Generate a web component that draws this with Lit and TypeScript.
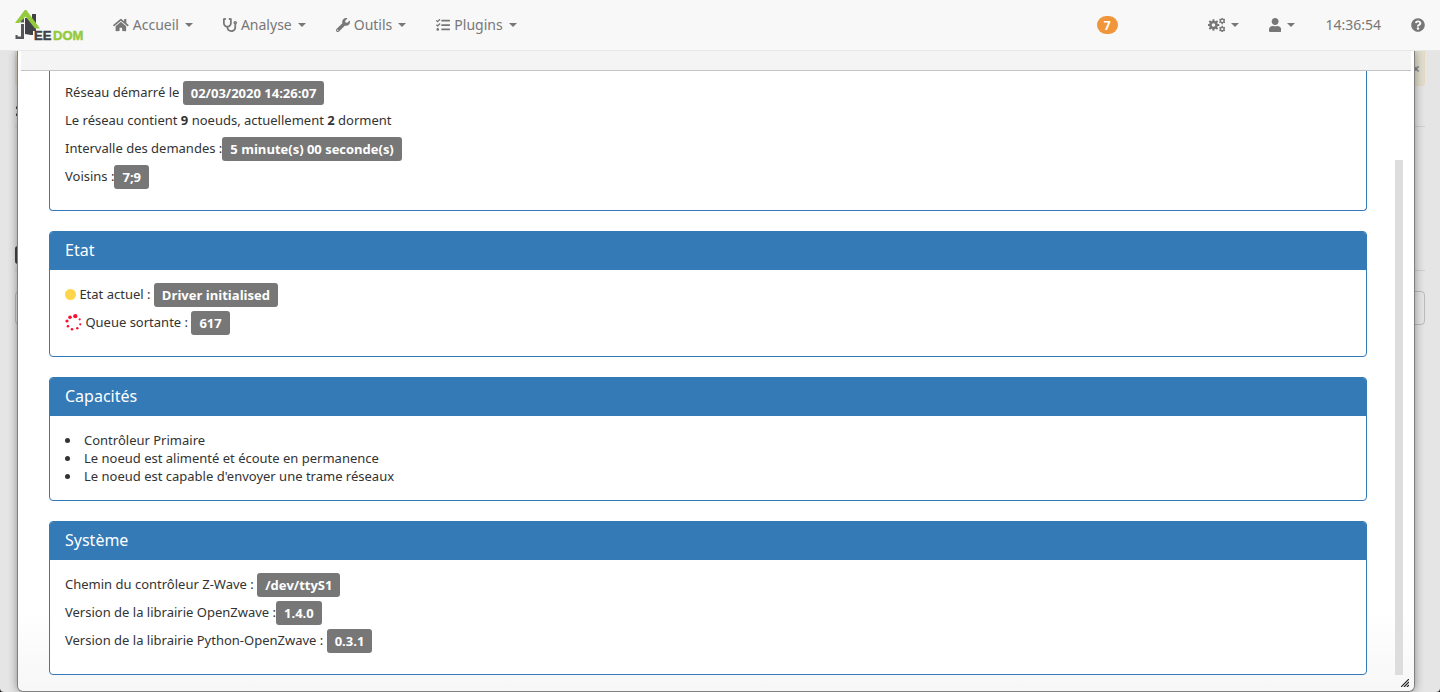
import { LitElement, html, css, svg, nothing } from "lit";
import { customElement, property } from "lit/decorators.js";

/** Outline of a toothed wheel with a round hole, centred on cx, cy. */
function gear(cx: number, cy: number, outer: number, inner: number, hole: number, teeth: number): string {
  const step = (Math.PI * 2) / teeth;
  const at = (r: number, a: number) => `${(cx + r * Math.cos(a)).toFixed(1)} ${(cy + r * Math.sin(a)).toFixed(1)}`;
  let d = "";
  for (let i = 0; i < teeth; i++) {
    const a = i * step - Math.PI / 2;
    d += `${i ? "L" : "M"}${at(inner, a - step * 0.3)}L${at(outer, a - step * 0.2)}L${at(outer, a + step * 0.2)}L${at(inner, a + step * 0.3)}`;
  }
  return `${d}ZM${cx + hole} ${cy}A${hole} ${hole} 0 1 0 ${cx - hole} ${cy}A${hole} ${hole} 0 1 0 ${cx + hole} ${cy}Z`;
}

const ICONS: Record<string, { w: number; d: string }> = {
  home: {
    w: 576,
    d: "M280.37 148.26L96 300.11V464a16 16 0 0 0 16 16l112.06-.29a16 16 0 0 0 15.92-16V368a16 16 0 0 1 16-16h64a16 16 0 0 1 16 16v95.64a16 16 0 0 0 16 16.05L464 480a16 16 0 0 0 16-16V300L295.67 148.26a12.19 12.19 0 0 0-15.3 0zM571.6 251.47L488 182.56V44.05a12 12 0 0 0-12-12h-56a12 12 0 0 0-12 12v72.61L318.47 43a48 48 0 0 0-61 0L4.34 251.47a12 12 0 0 0-1.6 16.9l25.5 31A12 12 0 0 0 45.15 301l235.22-193.74a12.19 12.19 0 0 1 15.3 0L530.9 301a12 12 0 0 0 16.9-1.6l25.5-31a12 12 0 0 0-1.7-16.93z",
  },
  stethoscope: {
    w: 512,
    d: "M447.1 112c-34.2.5-62.3 28.4-63 62.6-.5 24.3 12.5 45.6 32 56.8V344c0 57.3-50.2 104-112 104-60 0-109.2-44.1-111.9-99.2C265 333.8 320 269.2 320 192V36.6c0-11.4-8.1-21.3-19.3-23.5L237.8.5c-13-2.6-25.6 5.8-28.2 18.8L206.4 35c-2.6 13 5.8 25.6 18.8 28.2l30.7 6.1v121.4c0 52.9-42.2 96.7-95.1 97.2-53.4.5-96.9-42.7-96.9-96V69.4l30.7-6.1c13-2.6 21.4-15.2 18.8-28.2l-3.1-15.7C107.7 6.4 95.1-2 82.1.6L19.3 13C8.1 15.3 0 25.1 0 36.6V192c0 77.3 55.1 142 128.1 156.8C130.7 439.2 208.6 512 304 512c97 0 176-75.4 176-168V231.4c19.1-11.1 32-31.7 32-55.4 0-35.7-29.2-64.5-64.9-64zm.9 80c-8.8 0-16-7.2-16-16s7.2-16 16-16 16 7.2 16 16-7.2 16-16 16z",
  },
  wrench: {
    w: 512,
    d: "M507.73 109.1c-2.24-9.03-13.54-12.09-20.12-5.51l-74.36 74.36-67.88-11.31-11.31-67.88 74.36-74.36c6.62-6.62 3.43-17.9-5.66-20.16-47.38-11.74-99.55.91-136.58 37.93-39.64 39.64-50.55 97.1-34.05 147.2L18.74 402.76c-24.99 24.99-24.99 65.51 0 90.5 24.99 24.99 65.51 24.99 90.5 0l213.21-213.21c50.12 16.71 107.47 5.68 147.37-34.22 37.07-37.07 49.7-89.32 37.91-136.73zM64 472c-13.26 0-24-10.75-24-24 0-13.26 10.75-24 24-24s24 10.74 24 24c0 13.25-10.75 24-24 24z",
  },
  tasks: {
    w: 512,
    d: "M139.61 35.5a12 12 0 0 0-17 0L58.93 98.81l-22.7-22.12a12 12 0 0 0-17 0L3.53 92.41a12 12 0 0 0 0 17l47.59 47.4a12.78 12.78 0 0 0 17.61 0l15.59-15.62L156.52 69a12.09 12.09 0 0 0 .09-17zm0 159.19a12 12 0 0 0-17 0l-63.68 63.72-22.7-22.1a12 12 0 0 0-17 0L3.53 252a12 12 0 0 0 0 17L51 316.5a12.77 12.77 0 0 0 17.6 0l15.7-15.69 72.2-72.22a12 12 0 0 0 .09-16.9zM64 368c-26.49 0-48.59 21.5-48.59 48S37.53 464 64 464a48 48 0 0 0 0-96zm432 16H208a16 16 0 0 0-16 16v32a16 16 0 0 0 16 16h288a16 16 0 0 0 16-16v-32a16 16 0 0 0-16-16zm0-320H208a16 16 0 0 0-16 16v32a16 16 0 0 0 16 16h288a16 16 0 0 0 16-16V80a16 16 0 0 0-16-16zm0 160H208a16 16 0 0 0-16 16v32a16 16 0 0 0 16 16h288a16 16 0 0 0 16-16v-32a16 16 0 0 0-16-16z",
  },
  cogs: {
    w: 640,
    d: gear(200, 256, 215, 160, 66, 8) + gear(520, 108, 122, 92, 42, 6) + gear(520, 404, 122, 92, 42, 6),
  },
  user: {
    w: 448,
    d: "M224 256c70.7 0 128-57.3 128-128S294.7 0 224 0 96 57.3 96 128s57.3 128 128 128zm89.6 32h-16.7c-22.2 10.2-46.9 16-72.9 16s-50.6-5.8-72.9-16h-16.7C60.2 288 0 348.2 0 422.4V464c0 26.5 21.5 48 48 48h352c26.5 0 48-21.5 48-48v-41.6c0-74.2-60.2-134.4-134.4-134.4z",
  },
  help: {
    w: 512,
    d: "M504 256c0 136.997-111.043 248-248 248S8 392.997 8 256C8 119.083 119.043 8 256 8s248 111.083 248 248zM262.655 90c-54.497 0-89.255 22.957-116.549 63.758-3.536 5.286-2.353 12.415 2.715 16.258l34.699 26.31c5.205 3.947 12.621 3.008 16.665-2.122 17.864-22.658 30.113-35.797 57.303-35.797 20.429 0 45.698 13.148 45.698 32.958 0 14.976-12.363 22.667-32.534 33.976C247.128 238.528 216 254.941 216 296v4c0 6.627 5.373 12 12 12h56c6.627 0 12-5.373 12-12v-1.333c0-28.462 83.186-29.647 83.186-106.667 0-58.002-60.165-102-116.531-102zM256 338c-25.365 0-46 20.635-46 46 0 25.364 20.635 46 46 46s46-20.636 46-46c0-25.365-20.635-46-46-46z",
  },
};

const icon = (name: string) => {
  const { w, d } = ICONS[name];
  return html`<svg class="icon" viewBox="0 0 ${w} 512" aria-hidden="true"><path fill-rule="evenodd" d=${d}></path></svg>`;
};

@customElement("nav-bar")
export class NavBar extends LitElement {
  static styles = css`
    :host {
      display: flex;
      justify-content: space-between;
      position: relative;
      z-index: 1;
      height: 50px;
      background: #f8f8f8;
      border-bottom: 1px solid #e7e7e7;
      font-size: 14px;
      line-height: 20px;
      color: #777;
    }
    .group {
      display: flex;
    }
    .item {
      display: flex;
      align-items: center;
      padding: 0 15px;
      color: inherit;
      text-decoration: none;
      white-space: nowrap;
    }
    .brand {
      display: block;
      padding: 8px 14px 0 15px;
    }
    .logo {
      display: block;
      width: 69px;
      height: 34px;
    }
    .ee,
    .dom {
      font: bold 13px "Liberation Sans", Arial, sans-serif;
      fill: #414247;
      stroke: #414247;
      stroke-width: 0.5;
    }
    .dom {
      fill: #94ca3e;
      stroke: #94ca3e;
    }
    .icon {
      display: block;
      height: 14px;
      fill: currentColor;
    }
    .text {
      margin-left: 4px;
    }
    .caret {
      margin-left: 6px;
      border: 4px solid transparent;
      border-top-color: currentColor;
      border-bottom: 0;
    }
    .messages {
      margin-right: 60px;
    }
    .badge {
      padding: 2px 7px 1px;
      border-radius: 10px;
      background: #f0953a;
      color: #fff;
      font-size: 12px;
      line-height: 15px;
      font-weight: 700;
    }
  `;

  private menu(name: string, text = "") {
    return html`<a class="item" href="#" aria-label=${text || name}>
      ${icon(name)}${text ? html`<span class="text">${text}</span>` : nothing}<span class="caret"></span>
    </a>`;
  }

  render() {
    return html`
      <nav class="group">
        <a class="brand" href="#">
          <svg class="logo" viewBox="0 0 69 34">
            <path fill="#414247" d="M10 10h7V6h4v17l-3 0v4h-2l-6-1z"></path>
            <path fill="#55565b" d="M5.500 12.500L9 10v4.500H5.500zM6 16h3v15H.5v-4h2v1.500H6z"></path>
            <path fill="#94ca3e" d="M9.700 2h1.600L25 20.500h-5L10.500 8.500 4 15H0z"></path>
            <text class="ee" x="19" y="32">EE</text>
            <text class="dom" x="38" y="32">DOM</text>
          </svg>
        </a>
        ${this.menu("home", "Accueil")} ${this.menu("stethoscope", "Analyse")} ${this.menu("wrench", "Outils")}
        ${this.menu("tasks", "Plugins")}
      </nav>
      <div class="group">
        <a class="item messages" href="#"><span class="badge">7</span></a>
        ${this.menu("cogs")} ${this.menu("user")}
        <span class="item">14:36:54</span>
        <a class="item" href="#" aria-label="help">${icon("help")}</a>
      </div>
    `;
  }
}

@customElement("info-panel")
export class InfoPanel extends LitElement {
  @property() heading = "";

  static styles = css`
    :host {
      display: block;
      border: 1px solid #337ab7;
      border-radius: 4px;
      background: #fff;
      overflow: hidden;
    }
    .heading {
      margin: 0;
      padding: 9px 15px 11px;
      background: #337ab7;
      color: #fff;
      font-size: 16px;
      line-height: 18px;
      font-weight: 400;
    }
    .body {
      padding: 15px;
    }
    :host([continued]) {
      border-top: 0;
      border-top-left-radius: 0;
      border-top-right-radius: 0;
    }
    :host([continued]) .body {
      padding-top: 12px;
    }
  `;

  render() {
    return html`
      ${this.heading ? html`<h4 class="heading">${this.heading}</h4>` : nothing}
      <div class="body"><slot></slot></div>
    `;
  }
}

const SPINNER_DOTS = [
  [10.3, 2.2, 2.1],
  [5, 3.2, 1.8],
  [2, 7, 1.6],
  [3, 12.3, 1.3],
  [7, 15.3, 1.3],
  [12.3, 14.3, 1.2],
  [15.3, 10.3, 1.1],
  [14.7, 5.3, 1.1],
];

@customElement("app-root")
export class AppRoot extends LitElement {
  static styles = css`
    :host {
      display: flex;
      flex-direction: column;
      position: relative;
      height: 100vh;
      overflow: hidden;
      background: #222;
      font-family: "Noto Sans", "Open Sans", sans-serif;
      font-size: 13px;
      line-height: 18px;
      color: #333;
    }
    nav-bar {
      flex: none;
    }
    .page {
      flex: 1;
      padding: 0 15px;
      background: #e5e5e5;
      border-radius: 0 0 4px 4px;
    }
    .alert {
      display: flex;
      justify-content: flex-end;
      align-items: center;
      height: 34px;
      border: 1px solid #e5dac0;
      border-top: 0;
      border-radius: 0 0 4px 4px;
      background: #e2decd;
    }
    .dismiss {
      padding: 0 4px;
      border: 0;
      background: none;
      font: bold 14px "Noto Sans", sans-serif;
      color: #888;
    }
    .section {
      display: flex;
      align-items: flex-end;
      height: 40px;
      border-bottom: 1px solid #d0d0d0;
    }
    .section + .section {
      height: 143px;
    }
    .mark {
      height: 18px;
      margin-bottom: 6px;
      fill: #444;
    }
    .tag {
      width: 18px;
      height: 18px;
      margin-bottom: 6px;
      border-radius: 3px;
      background: #444;
    }
    .search {
      display: block;
      box-sizing: border-box;
      width: 100%;
      height: 34px;
      margin-top: 20px;
      border: 1px solid #bbb;
      border-radius: 4px;
      background: transparent;
    }
    /* The dialog floats over the page behind it. */
    .dialog {
      position: absolute;
      inset: 51px 25px 0 17px;
      display: flex;
      flex-direction: column;
      padding: 0 3px;
      border: 1px solid #808080;
      border-width: 0 1px 1px;
      border-radius: 0 0 6px 6px;
      background: linear-gradient(#fff calc(100% - 80px), #f7f7f7);
      box-shadow: 0 0 10px rgba(0, 0, 0, 0.4);
    }
    .titlebar {
      flex: none;
      height: 19px;
      background: #f4f4f4;
      border-bottom: 1px solid #c4c4c4;
    }
    .content {
      display: flex;
      flex: 1;
      padding: 0 8px 16px 28px;
    }
    .panels {
      flex: 1;
      display: flex;
      flex-direction: column;
      gap: 20px;
    }
    .track {
      width: 8px;
      margin: 89px 0 0 28px;
      background: #ddd;
    }
    .grip {
      position: absolute;
      right: 5px;
      bottom: 4px;
      width: 8px;
      height: 8px;
      stroke: #222;
      stroke-width: 1.2;
    }
    .row {
      margin: 0 0 10px;
    }
    .label {
      padding: 3px 8px;
      border-radius: 3px;
      background: #777;
      color: #fff;
      font-family: "Open Sans", "Noto Sans", sans-serif;
      font-weight: 700;
      vertical-align: -1px;
      line-height: 1;
    }
    .dot {
      display: inline-block;
      width: 11px;
      height: 11px;
      border-radius: 50%;
      background: #ffd54c;
      vertical-align: -1px;
    }
    .spinner {
      width: 17px;
      height: 17px;
      fill: #f8122f;
      vertical-align: -4px;
    }
    .list {
      margin: 0;
      padding: 0;
      list-style-position: inside;
    }
  `;

  render() {
    return html`
      <nav-bar></nav-bar>
      <main class="page">
        <div class="alert"><button class="dismiss" aria-label="close">×</button></div>
        <div class="section">
          <svg class="mark" viewBox="0 0 18 18"><path d="M1 5l2-2h13v4H1zM1 12l2-2h13v4H1z"></path></svg>
        </div>
        <div class="section"><span class="tag"></span></div>
        <input class="search" aria-label="search" />
      </main>
      <section class="dialog" role="dialog">
        <div class="titlebar"></div>
        <div class="content">
          <div class="panels">
            <info-panel continued>
              <p class="row">Réseau démarré le <span class="label">02/03/2020 14:26:07</span></p>
              <p class="row">Le réseau contient <b>9</b> noeuds, actuellement <b>2</b> dorment</p>
              <p class="row">Intervalle des demandes :<span class="label">5 minute(s) 00 seconde(s)</span></p>
              <p class="row">Voisins :<span class="label">7;9</span></p>
            </info-panel>
            <info-panel heading="Etat">
              <p class="row"><span class="dot"></span> Etat actuel : <span class="label">Driver initialised</span></p>
              <p class="row">
                <svg class="spinner" viewBox="0 0 17 17">
                  ${SPINNER_DOTS.map(([x, y, r]) => svg`<circle cx=${x} cy=${y} r=${r}></circle>`)}
                </svg>
                Queue sortante : <span class="label">617</span>
              </p>
            </info-panel>
            <info-panel heading="Capacités">
              <ul class="list">
                <li>Contrôleur Primaire</li>
                <li>Le noeud est alimenté et écoute en permanence</li>
                <li>Le noeud est capable d'envoyer une trame réseaux</li>
              </ul>
            </info-panel>
            <info-panel heading="Système">
              <p class="row">Chemin du contrôleur Z-Wave : <span class="label">/dev/ttyS1</span></p>
              <p class="row">Version de la librairie OpenZwave :<span class="label">1.4.0</span></p>
              <p class="row">Version de la librairie Python-OpenZwave : <span class="label">0.3.1</span></p>
            </info-panel>
          </div>
          <div class="track"></div>
        </div>
        <svg class="grip" viewBox="0 0 8 8"><path d="M0 8L8 0M3 8L8 3M6 8L8 6"></path></svg>
      </section>
    `;
  }
}
